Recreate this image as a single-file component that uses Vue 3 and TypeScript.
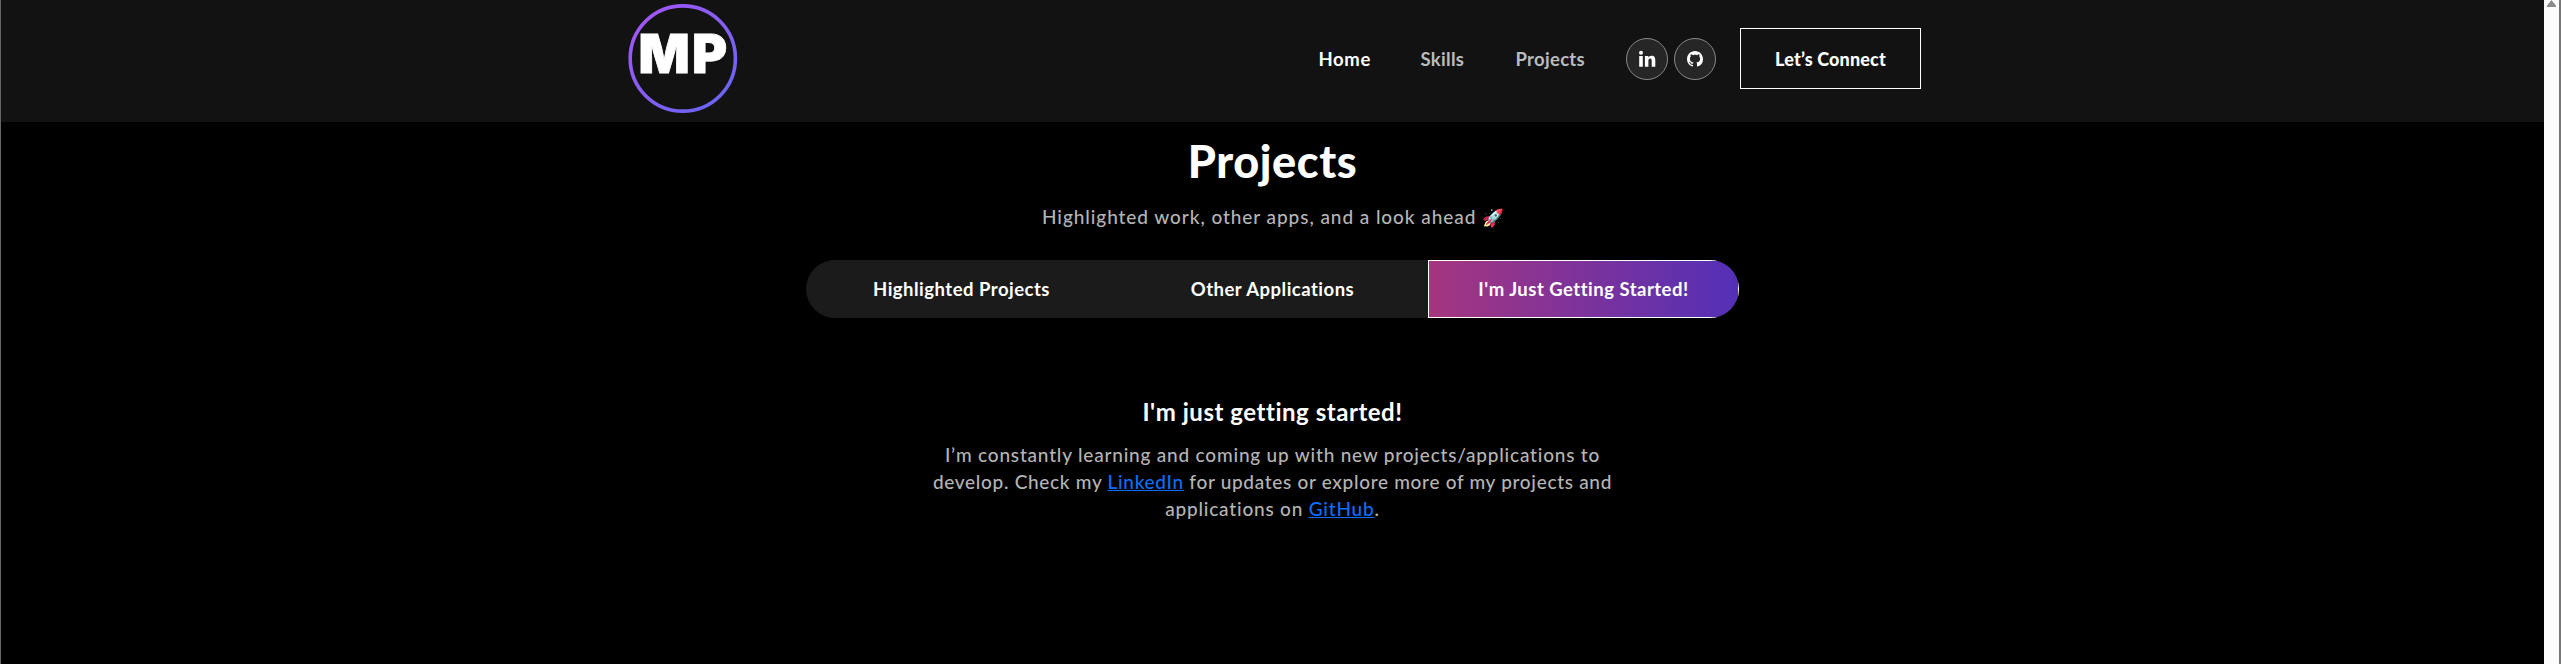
<script setup lang="ts">
import { ref } from 'vue'

const links = ['Home', 'Skills', 'Projects']
const activeLink = ref('Home')
const tabs = ['Highlighted Projects', 'Other Applications', "I'm Just Getting Started!"]
const activeTab = ref(2)
</script>

<template>
  <div class="window">
    <div class="page">
      <header class="navbar">
        <div class="container">
          <svg class="logo" viewBox="0 0 117 117">
            <defs>
              <linearGradient id="ring" x1="0" y1="0" x2="1" y2="1">
                <stop offset="0" stop-color="#a855f7" />
                <stop offset="1" stop-color="#6366f1" />
              </linearGradient>
            </defs>
            <circle cx="58.8" cy="58.5" r="52.6" fill="none" stroke="url(#ring)" stroke-width="3.6" />
            <text x="60" y="73" text-anchor="middle">MP</text>
          </svg>
          <nav class="links">
            <a
              v-for="link in links"
              :key="link"
              class="link"
              :class="{ active: link === activeLink }"
              @click="activeLink = link"
            >{{ link }}</a>
          </nav>
          <div class="social">
            <a class="round" aria-label="LinkedIn">
              <svg width="18" height="18" viewBox="0 0 18 18" fill="#fff">
                <circle cx="3" cy="2.8" r="2" />
                <path d="M1.2 6h3.6v10.8H1.2zM6.9 6h3.4v1.5c.6-1 1.7-1.8 3.3-1.8 2.9 0 3.7 1.9 3.7 4.7v6.4h-3.6v-5.7c0-1.5-.3-2.5-1.5-2.5-1.3 0-1.8 1-1.8 2.5v5.7H6.9z" />
              </svg>
            </a>
            <a class="round" aria-label="GitHub">
              <svg width="16" height="16" viewBox="0 0 16 16" fill="#fff">
                <path d="M8 0C3.58 0 0 3.58 0 8c0 3.54 2.29 6.53 5.47 7.59.4.07.55-.17.55-.38 0-.19-.01-.82-.01-1.49-2.01.37-2.53-.49-2.69-.94-.09-.23-.48-.94-.82-1.13-.28-.15-.68-.52-.01-.53.63-.01 1.08.58 1.23.82.72 1.21 1.87.87 2.33.66.07-.52.28-.87.51-1.07-1.78-.2-3.64-.89-3.64-3.95 0-.87.31-1.59.82-2.15-.08-.2-.36-1.02.08-2.12 0 0 .67-.21 2.2.82.64-.18 1.32-.27 2-.27s1.36.09 2 .27c1.53-1.04 2.2-.82 2.2-.82.44 1.1.16 1.92.08 2.12.51.56.82 1.27.82 2.15 0 3.07-1.87 3.75-3.65 3.95.29.25.54.73.54 1.48 0 1.07-.01 1.93-.01 2.2 0 .21.15.46.55.38A8.01 8.01 0 0 0 16 8c0-4.42-3.58-8-8-8" />
              </svg>
            </a>
          </div>
          <button class="connect">Let’s Connect</button>
        </div>
      </header>

      <main class="projects">
        <h2>Projects</h2>
        <p class="lead">Highlighted work, other apps, and a look ahead <span class="rocket">🚀</span></p>
        <div class="tabs">
          <button
            v-for="(tab, i) in tabs"
            :key="tab"
            class="tab"
            :class="{ active: i === activeTab }"
            @click="activeTab = i"
          >{{ tab }}</button>
        </div>
        <section class="panel">
          <h3>I'm just getting started!</h3>
          <p>
            I’m constantly learning and coming up with new projects/applications to<br>
            <span class="tight">develop. Check my <a>LinkedIn</a> for updates or explore more of my projects and</span><br>
            applications on <a>GitHub</a>.
          </p>
        </section>
      </main>
    </div>
    <div class="scrollbar"><i class="arrow"></i></div>
  </div>
</template>

<style>
body {
  background: #000;
  overflow: hidden;
}
</style>

<style scoped>
* {
  box-sizing: border-box;
}
.window {
  display: flex;
  width: 100%;
  height: 100vh;
  border-left: 1px solid #666;
  border-right: 2px solid #777;
  background: #000;
  color: #fff;
  font-family: Lato, "Liberation Sans", sans-serif;
}
.page {
  flex: 1;
}
.scrollbar {
  width: 15px;
  background: #fcfcfc;
}
.arrow {
  display: block;
  width: 9px;
  height: 7px;
  margin: 0 auto;
  background: #8b8b8b;
  clip-path: polygon(50% 0, 100% 80%, 100% 100%, 0 100%, 0 80%);
}
.navbar {
  height: 122px;
  background: #121212;
}
.container {
  display: flex;
  align-items: center;
  width: 1297px;
  height: 117px;
  margin: 0 auto;
}
.logo {
  width: 117px;
  height: 117px;
}
.logo text {
  fill: #fff;
  stroke: #fff;
  stroke-width: 0.8px;
  font: 900 53.6px Inter, sans-serif;
  letter-spacing: 2.4px;
}
.links {
  display: grid;
  grid-template-columns: 102px 95px 110.5px;
  margin-left: auto;
}
.link {
  font-size: 18.5px;
  line-height: 22px;
  font-weight: 700;
  letter-spacing: 0.3px;
  color: #bbb;
}
.link.active {
  color: #fff;
  letter-spacing: 0.6px;
}
.social {
  display: flex;
  gap: 6px;
}
.round {
  display: flex;
  align-items: center;
  justify-content: center;
  width: 42px;
  height: 42px;
  border: 1px solid #888;
  border-radius: 50%;
  background: #262626;
}
.connect {
  width: 181px;
  height: 61px;
  margin-left: 24px;
  padding: 0;
  border: 1px solid #fff;
  background: transparent;
  color: #fff;
  font: 900 18px Lato, sans-serif;
  letter-spacing: 0.15px;
}
.projects {
  padding-top: 12px;
  text-align: center;
}
h2 {
  margin: 0;
  font-size: 45px;
  line-height: 54px;
  font-weight: 900;
  letter-spacing: 0.6px;
}
.lead {
  margin: 14.5px 0 30.5px;
  color: #b4b4b4;
  font-size: 19px;
  line-height: 27px;
  font-weight: 500;
  letter-spacing: 0.93px;
}
.rocket {
  display: inline-block;
  width: 21px;
  font-size: 17.5px;
  line-height: 20px;
  letter-spacing: 0;
  filter: hue-rotate(-16deg) brightness(1.2);
}
.tabs {
  display: grid;
  grid-template-columns: repeat(3, 311px);
  width: 933px;
  height: 58px;
  margin: 0 auto;
  overflow: hidden;
  border-radius: 29px;
  background: #1b1b1b;
}
.tab {
  padding: 0;
  border: 0;
  background: transparent;
  color: #fff;
  font: 700 18.5px Lato, sans-serif;
  letter-spacing: 0.49px;
}
.tab.active {
  border: 1px solid #fff;
  background: linear-gradient(90.21deg, #aa367c -5.91%, #4a2fbd 111.58%);
}
.panel {
  padding-top: 79px;
}
h3 {
  margin: 0 0 14.5px;
  font-size: 24px;
  line-height: 29px;
  font-weight: 700;
  letter-spacing: 0.53px;
}
.panel p {
  margin: 0;
  color: #b4b4b4;
  font-size: 19px;
  line-height: 27px;
  font-weight: 500;
  letter-spacing: 0.8px;
}
.panel .tight {
  letter-spacing: 0.69px;
}
.panel a {
  color: #0d6efd;
  text-decoration: underline;
  text-decoration-thickness: 1px;
}
</style>
